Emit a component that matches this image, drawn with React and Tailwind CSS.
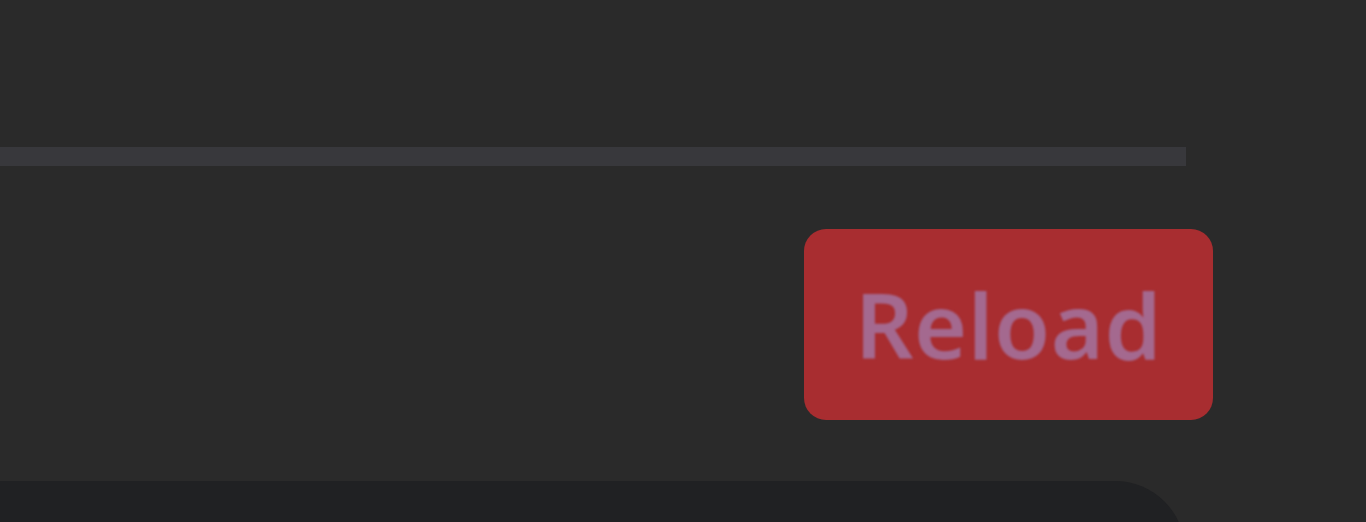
export default function App() {
  return (
    <div className="w-[1366px] h-[522px] overflow-hidden bg-[#2a2a2a] font-['Noto_Sans',sans-serif]">
      <div className="flex flex-col w-[1213px] pt-[147px]">
        {/* progress track */}
        <div className="w-[1186px] h-[19px] bg-[#38383c] blur-[0.6px]" />

        {/* reload action */}
        <div className="flex justify-end mt-[63px]">
          <button className="w-[409px] h-[191px] rounded-[22px] bg-[#a82d30] flex items-center justify-center">
            <span className="text-[91px] leading-none font-semibold text-[#a4698f] blur-[1px] tracking-[0.5px]">
              Reload
            </span>
          </button>
        </div>

        {/* panel below */}
        <div className="mt-[61px] w-[1185px] h-[120px] bg-[#202123] rounded-tr-[70px]" />
      </div>
    </div>
  );
}
